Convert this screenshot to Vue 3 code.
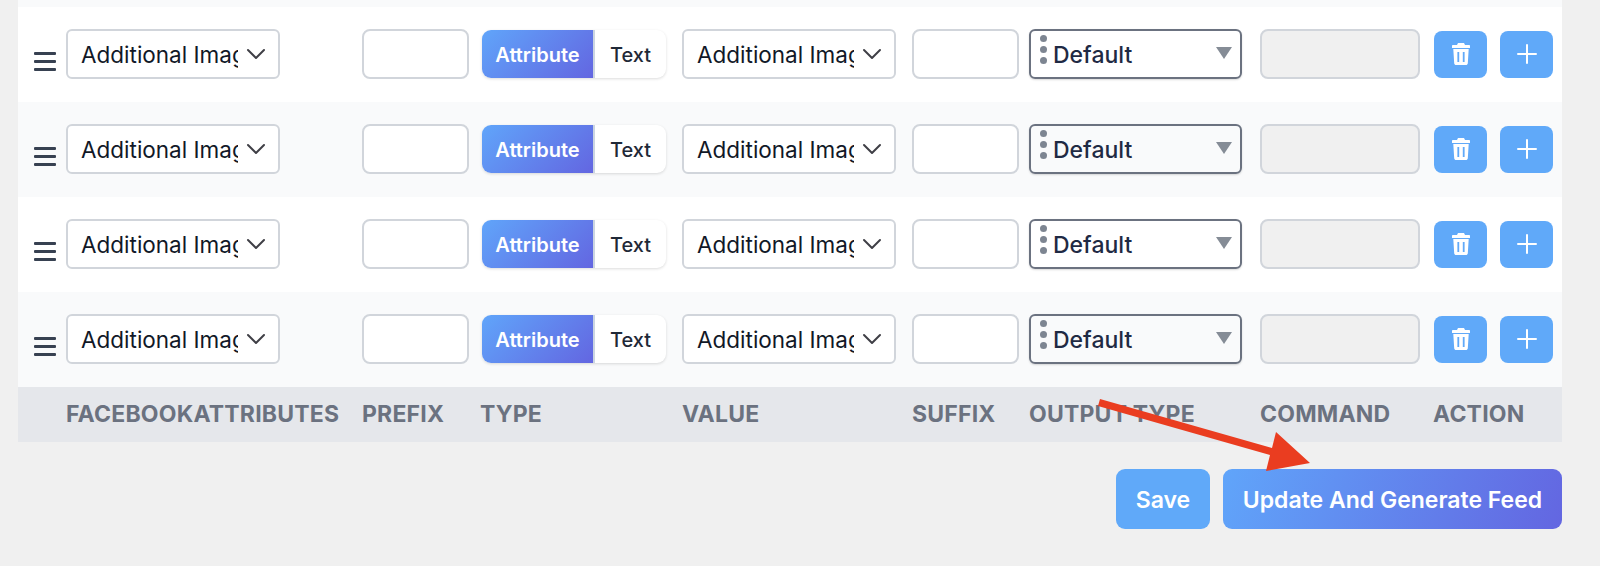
<script setup>
const rows = [1, 2, 3, 4]
const headers = ['FACEBOOKATTRIBUTES', 'PREFIX', 'TYPE', 'VALUE', 'SUFFIX', 'OUTPUT TYPE', 'COMMAND', 'ACTION']
</script>

<template>
  <div class="page">
    <div class="table">
      <div class="sliver"></div>
      <div v-for="r in rows" :key="r" class="row grid">
        <div class="handle"><span></span><span></span><span></span></div>
        <div class="select">
          <span class="select-text">Additional Image 1</span>
          <svg class="chev" width="20" height="12" viewBox="0 0 20 12"><path d="M2 2l8 8 8-8" fill="none" stroke="#3f3f46" stroke-width="2" stroke-linecap="round" stroke-linejoin="round"/></svg>
        </div>
        <div class="input"></div>
        <div class="toggle">
          <div class="tog-on">Attribute</div>
          <div class="tog-off">Text</div>
        </div>
        <div class="select">
          <span class="select-text">Additional Image 1</span>
          <svg class="chev" width="20" height="12" viewBox="0 0 20 12"><path d="M2 2l8 8 8-8" fill="none" stroke="#3f3f46" stroke-width="2" stroke-linecap="round" stroke-linejoin="round"/></svg>
        </div>
        <div class="input suffix"></div>
        <div class="output">
          <div class="dots"><i></i><i></i><i></i></div>
          <span class="output-text">Default</span>
          <div class="tri"></div>
        </div>
        <div class="command"></div>
        <div class="actions">
          <button class="icon-btn">
            <svg width="18" height="22" viewBox="0 0 18 22"><path fill="#fff" fill-rule="evenodd" d="M6 0h6l1 2h4.200c.5 0 .8.4.8.8V5H0V2.800C0 2.400.3 2 .8 2H5zM1.300 6h15.400l-.9 14.200c-.1 1-.9 1.800-1.900 1.800H4.100c-1 0-1.800-.8-1.900-1.800zM5.400 9v10h1.800V9zm5.400 0v10h1.800V9z"/></svg>
          </button>
          <button class="icon-btn">
            <svg width="20" height="20" viewBox="0 0 20 20"><path d="M10 1v18M1 10h18" stroke="#fff" stroke-width="2" stroke-linecap="round"/></svg>
          </button>
        </div>
      </div>
      <div class="head grid">
        <span></span>
        <span v-for="h in headers" :key="h" class="th">{{ h }}</span>
      </div>
    </div>
    <div class="footer">
      <button class="btn save">Save</button>
      <button class="btn update">Update And Generate Feed</button>
    </div>
    <svg class="arrow" width="230" height="90" viewBox="0 0 230 90">
      <path fill="#ea3d20" d="M0 8L2 1L174 50L178 34L212 65L168 73L172 57Z"/>
    </svg>
  </div>
</template>

<style>
html, body { margin: 0; background: #f0f0f0; }
</style>

<style scoped>
.page {
  position: relative;
  width: 1600px;
  height: 566px;
  overflow: hidden;
  background: #f0f0f0;
  padding: 0 38px 0 18px;
  box-sizing: border-box;
  font-family: Inter, "Liberation Sans", sans-serif;
}
.table { display: flex; flex-direction: column; }
.sliver { height: 7px; background: #f9fafb; }
.grid {
  display: grid;
  grid-template-columns: 48px 296px 120px 200px 230px 117px 231px 174px 128px;
}
.row {
  height: 95px;
  align-items: center;
  background: #fff;
  padding-bottom: 1px;
  box-sizing: border-box;
}
.row:nth-child(odd) { background: #f9fafb; }
.handle {
  margin-left: 16px;
  width: 22px;
  margin-top: 14px;
  display: flex;
  flex-direction: column;
  gap: 5px;
}
.handle span { height: 3px; background: #374151; border-radius: 1px; }
.select {
  width: 214px;
  height: 50px;
  box-sizing: border-box;
  border: 2px solid #d1d5db;
  border-radius: 6px;
  background: #fff;
  display: flex;
  align-items: center;
  padding: 0 12px 0 13px;
}
.select-text {
  width: 157px;
  overflow: hidden;
  white-space: nowrap;
  font-size: 22.500px;
  color: #111827;
}
.chev { margin-left: 8px; flex: none; }
.input {
  width: 107px;
  height: 50px;
  box-sizing: border-box;
  border: 2px solid #d1d5db;
  border-radius: 8px;
  background: #fff;
}
.toggle {
  width: 184px;
  height: 48px;
  display: flex;
  border-radius: 9px;
  overflow: hidden;
  background: #fff;
  box-shadow: 0 1px 3px rgba(0, 0, 0, .14);
}
.tog-on {
  width: 113px;
  display: flex;
  align-items: center;
  justify-content: center;
  box-sizing: border-box;
  padding-top: 2px;
  background: linear-gradient(135deg, #60a5fa, #6366e1);
  color: #fff;
  font-size: 20px;
  font-weight: 600;
  border-right: 2px solid #cbd5e1;
}
.tog-off {
  flex: 1;
  display: flex;
  align-items: center;
  justify-content: center;
  box-sizing: border-box;
  padding-top: 2px;
  color: #1f2937;
  font-size: 20px;
  font-weight: 500;
}
.output {
  width: 213px;
  height: 50px;
  box-sizing: border-box;
  border: 2px solid #6b7280;
  border-radius: 6px;
  display: flex;
  align-items: center;
  padding: 2px 8px 0 9px;
  position: relative;
  box-shadow: 0 1px 2px rgba(0, 0, 0, .15);
}
.dots {
  display: flex;
  flex-direction: column;
  gap: 4px;
  margin-top: -12px;
  margin-right: 6px;
}
.dots i { width: 7px; height: 7px; border-radius: 50%; background: #7d8591; }
.output-text { font-size: 23px; color: #1f2a44; font-weight: 500; }
.tri {
  margin-left: auto;
  width: 0;
  height: 0;
  border-left: 8px solid transparent;
  border-right: 8px solid transparent;
  border-top: 12px solid #858c96;
  margin-top: -4px;
}
.command {
  width: 160px;
  height: 50px;
  box-sizing: border-box;
  border: 2px solid #d1d5db;
  border-radius: 8px;
  background: #f0f0f0;
}
.actions { display: flex; gap: 13px; }
.icon-btn {
  width: 53px;
  height: 47px;
  padding: 0;
  border: none;
  border-radius: 8px;
  background: #60a9f9;
  display: flex;
  align-items: center;
  justify-content: center;
}
.head {
  height: 55px;
  align-items: center;
  padding-bottom: 1px;
  box-sizing: border-box;
  background: #e5e7eb;
}
.th {
  font-size: 23px;
  font-weight: 700;
  color: #6b7280;
  white-space: nowrap;
  letter-spacing: .2px;
}
.th:nth-child(4) { margin-left: -2px; }
.th:last-child { margin-left: -1px; }
.footer {
  display: flex;
  justify-content: flex-end;
  gap: 13px;
  margin-top: 27px;
}
.btn {
  height: 60px;
  border: none;
  border-radius: 9px;
  color: #fff;
  font-family: inherit;
  font-size: 23px;
  font-weight: 600;
  padding: 2px 0 0;
}
.save { width: 94px; background: #60a9f9; }
.update { width: 339px; background: linear-gradient(110deg, #60a5fa, #6366e1); }
.arrow { position: absolute; left: 1098px; top: 398px; }
</style>
